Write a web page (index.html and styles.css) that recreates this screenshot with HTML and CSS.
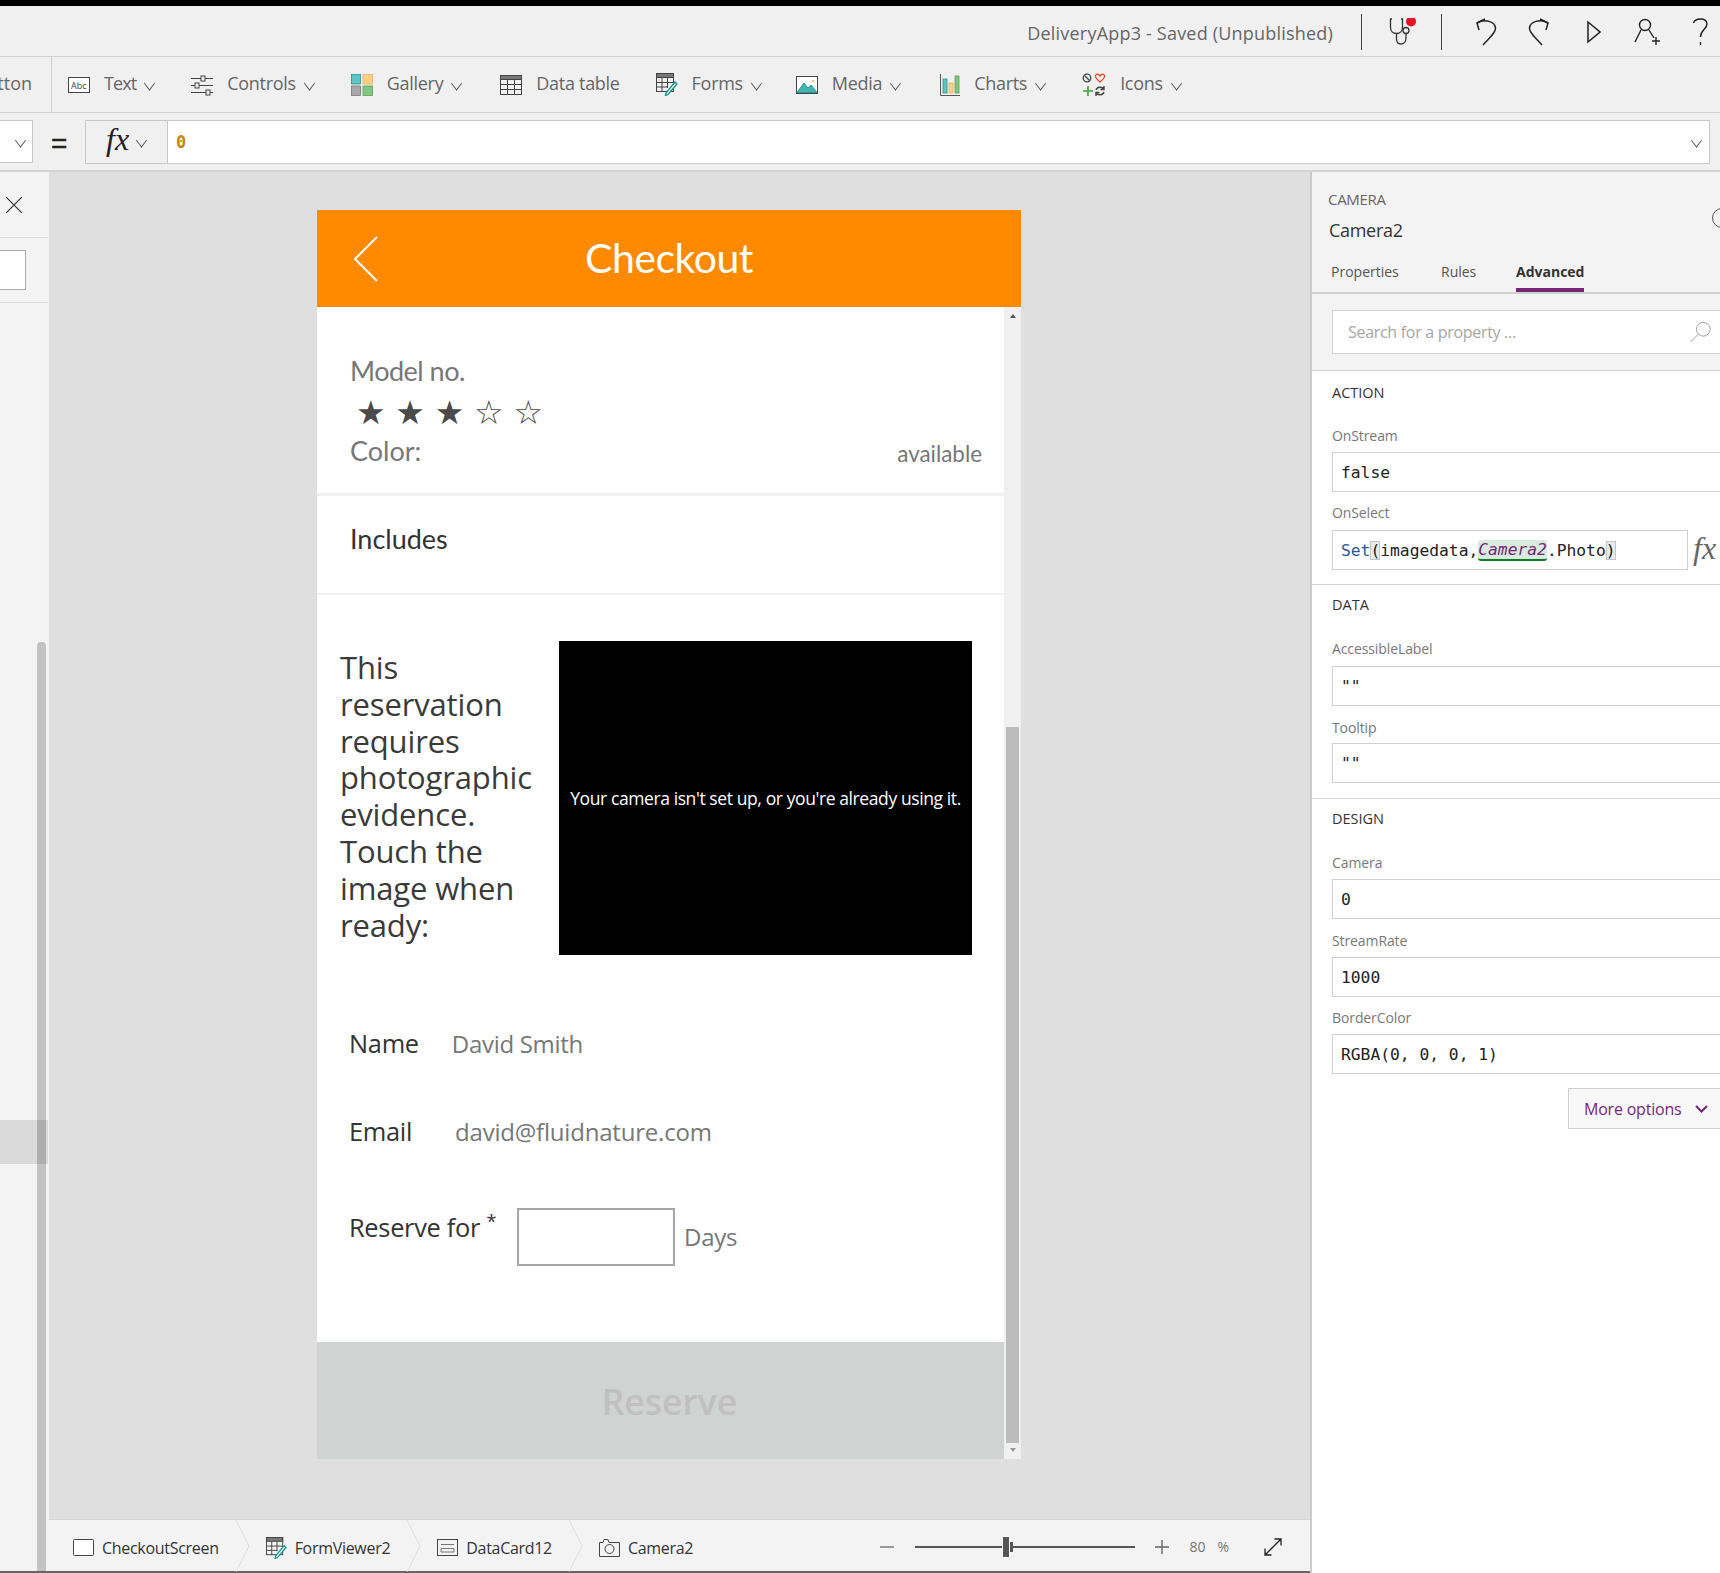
FILE: index.html
```html
<!DOCTYPE html>
<html>
	<head>
		<meta charset="UTF-8">
		<title>DeliveryApp3</title>
		<link rel="stylesheet" href="styles.css">
	</head>
	<body>
		<div class="app">
			<!-- title bar -->
			<div class="titlebar">
				<span class="app-name">DeliveryApp3 - Saved (Unpublished)</span>
				<span class="bar-sep sep-first"></span>
				<svg class="ic-check" width="28" height="28" viewBox="0 0 28 28" fill="none" stroke="#333" stroke-width="1.3">
					<path d="M3 1H1.5V9C1.5 13 4 15.5 7.5 15.5S13.5 13 13.5 9V1H12"/>
					<path d="M7.5 15.5V21C7.5 24.500 9.500 26 12 26S17 24 17 20V15.500"/>
					<circle cx="17" cy="12.500" r="3"/>
					<circle cx="22" cy="3.500" r="5" fill="#e81123" stroke="none"/>
				</svg>
				<span class="bar-sep sep-second"></span>
				<svg class="ic-undo" width="22" height="28" viewBox="0 0 22 28" fill="none" stroke="#222" stroke-width="1.5">
					<path d="M10 1L2 5L4 12"/>
					<path d="M8 27C14 20 21 15 20.500 10C20 4 10 0 2 5"/>
				</svg>
				<svg class="ic-redo" width="22" height="28" viewBox="0 0 22 28" fill="none" stroke="#222" stroke-width="1.5">
					<path d="M12 1L20 5L18 12"/>
					<path d="M14 27C8 20 1 15 1.500 10C2 4 12 0 20 5"/>
				</svg>
				<svg class="ic-play" width="14" height="24" viewBox="0 0 14 24" fill="none" stroke="#222" stroke-width="1.5">
					<path d="M1 2L13 12L1 22Z"/>
				</svg>
				<svg class="ic-user" width="27" height="28" viewBox="0 0 27 28" fill="none" stroke="#222" stroke-width="1.4">
					<circle cx="11" cy="7" r="5.500"/>
					<path d="M7 12L1 24M15 12L20 20"/>
					<path d="M22 19V27M18 23H26"/>
				</svg>
				<svg class="ic-help" width="17" height="30" viewBox="0 0 17 30" fill="none" stroke="#222" stroke-width="1.4">
					<path d="M1.500 6C3 1 14 0 15 6.500C15.500 12 8.500 12.500 8.500 20"/>
					<path d="M8.500 25V28"/>
				</svg>
			</div>

			<!-- insert toolbar -->
			<div class="toolbar">
				<div class="tool-cut"><span>tton</span></div>
				<div class="tool">
					<svg width="22" height="16" viewBox="0 0 22 16" fill="#fff" stroke="#444">
						<rect x="0.500" y="0.500" width="21" height="15"/>
						<text x="3" y="11.500" class="ic-abc">Abc</text>
					</svg>
					<span class="tool-label label-text">Text</span><i class="chev"></i>
				</div>
				<div class="tool">
					<svg width="22" height="22" viewBox="0 0 22 22" fill="none" stroke="#444">
						<path d="M0 4.500H22M0 11.500H22M0 18.500H22"/>
						<rect x="10" y="2" width="4" height="5" fill="#f0f0f0"/>
						<rect x="4" y="9" width="4" height="5" fill="#f0f0f0"/>
						<rect x="15" y="16" width="4" height="5" fill="#f0f0f0"/>
					</svg>
					<span class="tool-label">Controls</span><i class="chev"></i>
				</div>
				<div class="tool tool-gallery">
					<svg width="22" height="22" viewBox="0 0 22 22" stroke="#666" stroke-width="0.800">
						<rect x="0.500" y="0.500" width="9" height="9.500" fill="#5fc4c4" stroke="#2b8f8f"/>
						<rect x="12" y="0.500" width="9.500" height="9.500" fill="#fbcf86" stroke="#e8b060"/>
						<rect x="0.500" y="12" width="9" height="9.500" fill="#a8a8a8" stroke="#777"/>
						<rect x="12" y="12" width="9.500" height="9.500" fill="#86c486" stroke="#55a055"/>
					</svg>
					<span class="tool-label">Gallery</span><i class="chev"></i>
				</div>
				<div class="tool tool-table">
					<svg width="22" height="20" viewBox="0 0 22 20" fill="none" stroke="#444">
						<rect x="0.500" y="0.500" width="21" height="19"/>
						<rect x="0.500" y="0.500" width="21" height="4" fill="#777"/>
						<path d="M0 9.500H22M0 14.500H22M7.500 5V20M14.500 5V20"/>
					</svg>
					<span class="tool-label">Data table</span>
				</div>
				<div class="tool tool-forms">
					<svg width="22" height="23" viewBox="0 0 22 23" fill="none" stroke="#444">
						<rect x="0.500" y="0.500" width="17" height="18"/>
						<rect x="0.500" y="0.500" width="17" height="4" fill="#777"/>
						<path d="M0 9.500H17M0 14H12M6 5V19M11.500 5V15"/>
						<path d="M19 9L21 11L12 21.500L9.500 22.500L10 20Z" fill="#f0f0f0" stroke="#12928f" stroke-width="1.300"/>
					</svg>
					<span class="tool-label">Forms</span><i class="chev"></i>
				</div>
				<div class="tool tool-media">
					<svg width="22" height="18" viewBox="0 0 22 18" fill="#fff" stroke="#444">
						<rect x="0.500" y="0.500" width="21" height="17"/>
						<path d="M1 16.500L8 7L12 12L15 9L21 16.500Z" fill="#45b3b0" stroke="#2b9a98"/>
						<circle cx="17" cy="5" r="1" fill="#f5b24a" stroke="none"/>
					</svg>
					<span class="tool-label">Media</span><i class="chev"></i>
				</div>
				<div class="tool">
					<svg width="20" height="22" viewBox="0 0 20 22" fill="none">
						<path d="M0.500 0V21.500H20" stroke="#555"/>
						<rect x="3" y="5" width="4" height="14" fill="#5fc4c4" stroke="#2b8f8f" stroke-width="0.800"/>
						<rect x="9" y="9" width="4" height="10" fill="#fbcf86" stroke="#e8b060" stroke-width="0.800"/>
						<rect x="15" y="2" width="4" height="17" fill="#86c486" stroke="#55a055" stroke-width="0.800"/>
					</svg>
					<span class="tool-label">Charts</span><i class="chev"></i>
				</div>
				<div class="tool">
					<svg width="24" height="24" viewBox="0 0 24 24" fill="none">
						<circle cx="5" cy="5" r="3.800" stroke="#444" stroke-width="1.300"/>
						<path d="M2.500 2.500L7.500 7.500" stroke="#444" stroke-width="1.300"/>
						<path d="M18 9C15 6.500 13 4.500 13.500 2.500C14.500 0.500 17 1 18 3C19 1 21.500 0.500 22.500 2.500C23 4.500 21 6.500 18 9Z" stroke="#e8431f" stroke-width="1.300"/>
						<path d="M6 13V23M1 18H11" stroke="#3aa43a" stroke-width="1.600"/>
						<path d="M14 17C15 13.500 20 13.500 22 16M22 13V16.500H18.500M22 19C21 22.500 16 22.500 14 20M14 23V19.500H17.500" stroke="#444" stroke-width="1.400"/>
					</svg>
					<span class="tool-label">Icons</span><i class="chev"></i>
				</div>
			</div>

			<!-- formula bar -->
			<div class="formula-bar">
				<div class="prop-select"><i class="chev chev-dark"></i></div>
				<span class="equals">=</span>
				<div class="fx-btn"><span class="fx-text">fx</span><i class="chev chev-dark"></i></div>
				<div class="formula-input">
					<span class="formula-value">0</span>
					<i class="chev chev-dark"></i>
				</div>
			</div>

			<div class="workspace">
				<!-- tree view, cut off on the left -->
				<div class="tree">
					<div class="tree-close">
						<svg width="16" height="16" viewBox="0 0 16 16" stroke="#333" stroke-width="1.200"><path d="M0 0L16 16M16 0L0 16"/></svg>
					</div>
					<div class="tree-search"><div class="tree-input"></div></div>
					<div class="tree-selected"></div>
					<div class="tree-scroll"></div>
				</div>

				<div class="stage">
					<div class="canvas">
						<div class="phone">
							<div class="phone-head">
								<svg class="back" width="24" height="46" viewBox="0 0 24 46" fill="none" stroke="#fff" stroke-width="2"><path d="M23 1L1 23L23 45"/></svg>
								<span class="phone-title">Checkout</span>
							</div>
							<div class="phone-body">
								<div class="phone-main">
									<div class="block-model">
										<div class="model-name model-no">Model no.</div>
										<div class="stars">
											<span class="star">★</span><span class="star">★</span><span class="star">★</span><span class="star">☆</span><span class="star">☆</span>
										</div>
										<div class="color-row">
											<span class="model-name">Color:</span>
											<span class="avail">available</span>
										</div>
									</div>
									<div class="block-includes">Includes</div>
									<div class="block-photo">
										<div class="photo-text">This reservation requires photographic evidence. Touch the image when ready:</div>
										<div class="camera-box">Your camera isn't set up, or you're already using it.</div>
									</div>
									<div class="form-row name-row">
										<span class="form-label">Name</span>
										<span class="form-value name-value">David Smith</span>
									</div>
									<div class="form-row email-row">
										<span class="form-label">Email</span>
										<span class="form-value email-value">david@fluidnature.com</span>
									</div>
									<div class="form-row reserve-row">
										<span class="form-label reserve-label">Reserve for <sup class="req">*</sup></span>
										<div class="days-input"></div>
										<span class="form-value days">Days</span>
									</div>
									<div class="reserve-btn">Reserve</div>
								</div>
								<div class="phone-scroll">
									<span class="arrow-up"></span>
									<div class="phone-thumb"></div>
									<span class="arrow-down"></span>
								</div>
							</div>
						</div>
					</div>

					<!-- breadcrumb and zoom -->
					<div class="statusbar">
						<div class="crumb crumb-first">
							<svg width="21" height="17" viewBox="0 0 21 17" fill="#fff" stroke="#444"><rect x="0.500" y="0.500" width="20" height="16" rx="1"/></svg>
							<span>CheckoutScreen</span>
						</div>
						<svg class="crumb-sep" width="14" height="52" viewBox="0 0 14 52" fill="none" stroke="#ddd"><path d="M0 0L13 26L0 52"/></svg>
						<div class="crumb">
							<svg width="21" height="22" viewBox="0 0 22 23" fill="none" stroke="#444">
								<rect x="0.500" y="0.500" width="17" height="18"/>
								<rect x="0.500" y="0.500" width="17" height="4" fill="#777"/>
								<path d="M0 9.500H17M0 14H12M6 5V19M11.500 5V15"/>
								<path d="M19 9L21 11L12 21.500L9.500 22.500L10 20Z" fill="#f3f3f3" stroke="#12928f" stroke-width="1.300"/>
							</svg>
							<span>FormViewer2</span>
						</div>
						<svg class="crumb-sep" width="14" height="52" viewBox="0 0 14 52" fill="none" stroke="#ddd"><path d="M0 0L13 26L0 52"/></svg>
						<div class="crumb">
							<svg width="21" height="17" viewBox="0 0 21 17" fill="none" stroke="#444">
								<rect x="0.500" y="0.500" width="20" height="16"/>
								<path d="M4 5.500H17M4 9.500H17V13H4Z" stroke="#777"/>
							</svg>
							<span>DataCard12</span>
						</div>
						<svg class="crumb-sep" width="14" height="52" viewBox="0 0 14 52" fill="none" stroke="#ddd"><path d="M0 0L13 26L0 52"/></svg>
						<div class="crumb">
							<svg width="21" height="18" viewBox="0 0 21 18" fill="none" stroke="#444">
								<path d="M0.500 3.500H4L5 0.500H9L10 3.500H20.500V17.500H0.500Z"/>
								<circle cx="10.500" cy="10" r="4.500"/>
							</svg>
							<span>Camera2</span>
						</div>
						<div class="zoom-tools">
							<span class="zoom-minus"></span>
							<div class="slider">
								<span class="slider-left"></span>
								<span class="slider-thumb"></span>
								<span class="slider-tick"></span>
								<span class="slider-right"></span>
							</div>
							<svg class="zoom-plus" width="14" height="14" viewBox="0 0 14 14" stroke="#666" stroke-width="1.400"><path d="M7 0V14M0 7H14"/></svg>
							<span class="zoom-num">80</span>
							<span class="zoom-pct">%</span>
							<svg class="zoom-fit" width="18" height="18" viewBox="0 0 18 18" fill="none" stroke="#222" stroke-width="1.300">
								<path d="M1 17L17 1M10.500 1H17V7.500M1 10.500V17H7.500"/>
							</svg>
						</div>
					</div>
				</div>

				<!-- properties pane -->
				<div class="pane">
					<div class="pane-head">
						<div class="pane-type">CAMERA</div>
						<div class="pane-name">Camera2</div>
						<span class="pane-info"></span>
						<div class="tabs">
							<span class="tab tab-props">Properties</span>
							<span class="tab tab-rules">Rules</span>
							<span class="tab tab-active">Advanced</span>
						</div>
						<div class="search">
							<span>Search for a property ...</span>
							<svg width="22" height="22" viewBox="0 0 24 24" fill="none" stroke="#999"><circle cx="14.500" cy="9" r="7.500"/><path d="M9 14.500L0.500 23"/></svg>
						</div>
					</div>
					<div class="section section-action">
						<div class="section-title">ACTION</div>
						<div class="field-label">OnStream</div>
						<div class="field-input">false</div>
						<div class="field-label label-select">OnSelect</div>
						<div class="select-row">
							<div class="field-input field-short">
								<span class="code-fn">Set</span><span class="code-paren">(</span>imagedata,<span class="code-ref">Camera2</span>.Phot<span class="code-last">o</span><span class="code-paren">)</span>
							</div>
							<span class="fx-side">fx</span>
						</div>
					</div>
					<div class="section section-data">
						<div class="section-title">DATA</div>
						<div class="field-label">AccessibleLabel</div>
						<div class="field-input field-accessible">""</div>
						<div class="field-label">Tooltip</div>
						<div class="field-input field-tooltip">""</div>
					</div>
					<div class="section section-last">
						<div class="section-title">DESIGN</div>
						<div class="field-label">Camera</div>
						<div class="field-input">0</div>
						<div class="field-label">StreamRate</div>
						<div class="field-input">1000</div>
						<div class="field-label label-border">BorderColor</div>
						<div class="field-input">RGBA(0, 0, 0, 1)</div>
						<div class="more-btn">
							<span>More options</span>
							<svg width="13" height="8" viewBox="0 0 13 8" fill="none" stroke="#742774" stroke-width="2"><path d="M1 1L6.500 6.500L12 1"/></svg>
						</div>
					</div>
				</div>
			</div>
		</div>
	</body>
</html>
```

FILE: styles.css
```css
*{
	box-sizing: border-box;
}
html,body{
	margin: 0;
	padding: 0;
	height: 100%;
	overflow: hidden;
}
body{
	font-family: "Open Sans", sans-serif;
	color: #333;
	background-color: #f0f0f0;
}
svg{
	display: block;
	flex: none;
}
i{
	font-style: normal;
}
.app{
	display: flex;
	flex-direction: column;
	width: 1720px;
	height: 1573px;
	border-top: 6px solid #000;
	overflow: hidden;
}

/* title bar */
.titlebar{
	display: flex;
	align-items: center;
	justify-content: flex-end;
	height: 51px;
	padding: 1px 11px 0 0;
	border-bottom: 1px solid #d0d0d0;
	flex: none;
}
.app-name{
	font-size: 18px;
	letter-spacing: .2px;
	color: #666;
	margin: 2px 28px 0 0;
}
.bar-sep{
	width: 1px;
	height: 36px;
	background-color: #444;
}
.ic-check{
	margin-left: 27px;
}
.sep-second{
	margin-left: 24px;
}
.ic-undo{
	margin-left: 33px;
}
.ic-redo{
	margin-left: 31px;
}
.ic-play{
	margin-left: 37px;
}
.ic-user{
	margin-left: 33px;
}
.ic-help{
	margin-left: 31px;
}

/* toolbar */
.toolbar{
	display: flex;
	align-items: center;
	height: 56px;
	flex: none;
	border-bottom: 1px solid #d0d0d0;
}
.tool-cut{
	width: 52px;
	height: 100%;
	border-right: 1px solid #d0d0d0;
	display: flex;
	align-items: center;
	justify-content: flex-end;
	padding: 0 19px 4px 0;
	font-size: 18px;
	color: #666;
	overflow: hidden;
	margin-right: 16px;
}
.tool{
	display: flex;
	align-items: center;
	margin-right: 35px;
}
.tool-gallery{
	margin-right: 37px;
}
.tool-table{
	margin-right: 36px;
}
.tool-forms{
	margin-right: 33px;
}
.tool-media{
	margin-right: 38px;
}
.tool svg{
	margin-right: 14px;
}
.tool-label{
	font-size: 18px;
	letter-spacing: -.3px;
	color: #666;
	margin-top: -4px;
}
.label-text{
	letter-spacing: -.9px;
}
.ic-abc{
	font-family: "Open Sans", sans-serif;
	font-size: 9px;
	fill: #444;
	stroke: none;
}
.chev{
	display: block;
	width: 9px;
	height: 9px;
	border-right: 1px solid #555;
	border-bottom: 1px solid #555;
	transform: rotate(45deg) skew(8deg,8deg);
	margin: -2px 2px 0 9px;
	flex: none;
}

/* formula bar */
.formula-bar{
	display: flex;
	align-items: center;
	height: 59px;
	flex: none;
	border-bottom: 2px solid #d4d4d4;
}
.prop-select{
	width: 33px;
	height: 43px;
	background-color: #fff;
	border: 1px solid #c8c8c8;
	border-left: 0;
	display: flex;
	align-items: center;
	justify-content: flex-end;
	padding-right: 5px;
}
.chev-dark{
	margin: -3px 2px 0 0;
}
.equals{
	width: 52px;
	padding: 4px 0 0 18px;
	font-size: 28px;
	color: #222;
	-webkit-text-stroke: .4px #222;
	font-family: "Liberation Sans", sans-serif;
}
.fx-btn{
	width: 82px;
	height: 44px;
	border: 1px solid #c8c8c8;
	border-right: 0;
	display: flex;
	align-items: center;
	padding-left: 20px;
}
.fx-text{
	font-family: "Liberation Serif", serif;
	font-style: italic;
	font-size: 32px;
	color: #222;
	margin-right: 8px;
	margin-top: -4px;
}
.formula-input{
	width: 1543px;
	height: 44px;
	background-color: #fff;
	border: 1px solid #c8c8c8;
	display: flex;
	align-items: center;
	justify-content: space-between;
	padding: 0 6px 0 8px;
}
.formula-value{
	font-family: "DejaVu Sans Mono", monospace;
	font-size: 17px;
	color: #c8860a;
	font-weight: bold;
}

.workspace{
	display: flex;
	flex: 1;
	min-height: 0;
}

/* tree */
.tree{
	position: relative;
	width: 49px;
	flex: none;
	background-color: #f3f3f3;
	border-bottom: 2px solid #666;
}
.tree-close{
	height: 66px;
	border-bottom: 1px solid #dcdcdc;
	margin-right: 1px;
	padding: 25px 0 0 6px;
}
.tree-search{
	height: 65px;
	padding-top: 12px;
	border-bottom: 1px solid #dcdcdc;
	margin-right: 1px;
}
.tree-input{
	width: 26px;
	height: 40px;
	background-color: #fff;
	border: 1px solid #aaa;
	border-left: 0;
}
.tree-selected{
	height: 44px;
	margin-top: 817px;
	margin-right: 1px;
	background-color: #dadada;
}
.tree-scroll{
	position: absolute;
	left: 37px;
	top: 470px;
	bottom: 0;
	width: 9px;
	border-radius: 4px 4px 0 0;
	background-color: rgba(0,0,0,.2);
}

/* stage */
.stage{
	display: flex;
	flex-direction: column;
	flex: 1;
	min-width: 0;
	background-color: #dfdfdf;
}
.canvas{
	flex: 1;
	padding: 38px 0 0 268px;
	min-height: 0;
}
.phone{
	display: flex;
	flex-direction: column;
	width: 704px;
	height: 1249px;
	background-color: #fff;
}
.phone-head{
	position: relative;
	display: flex;
	align-items: center;
	justify-content: center;
	height: 97px;
	flex: none;
	background-color: #ff8a00;
}
.back{
	position: absolute;
	left: 37px;
	top: 26px;
}
.phone-title{
	font-family: Lato, sans-serif;
	font-size: 41px;
	color: #fff;
	letter-spacing: -.5px;
	margin-top: -2px;
}
.phone-body{
	display: flex;
	flex: 1;
	min-height: 0;
}
.phone-main{
	display: flex;
	flex-direction: column;
	width: 687px;
	flex: none;
}
.block-model{
	height: 189px;
	flex: none;
	padding: 51px 22px 0 33px;
	border-bottom: 3px solid #f0f0f0;
}
.model-name{
	font-family: Lato, sans-serif;
	font-size: 27px;
	line-height: 26px;
	color: #777;
}
.model-no{
	letter-spacing: -.5px;
}
.stars{
	display: flex;
	height: 24px;
	margin: 16px 0 14px 0;
	padding-left: 1px;
}
.star{
	display: flex;
	align-items: center;
	justify-content: center;
	width: 39.4px;
	font-family: "DejaVu Sans", sans-serif;
	font-size: 33px;
	color: #4a4a4a;
}
.color-row{
	display: flex;
	justify-content: space-between;
	align-items: flex-end;
}
.avail{
	font-family: Lato, sans-serif;
	font-size: 22.4px;
	line-height: 26px;
	color: #777;
	margin-bottom: -3px;
}
.block-includes{
	height: 99px;
	flex: none;
	padding: 0 0 12px 33px;
	display: flex;
	align-items: center;
	font-family: Lato, sans-serif;
	font-size: 27px;
	color: #333;
	border-bottom: 2px solid #f0f0f0;
}
.block-photo{
	display: flex;
	padding: 46px 0 0 23px;
	flex: none;
}
.photo-text{
	width: 219px;
	padding-right: 18px;
	margin-top: 8px;
	font-size: 31px;
	line-height: 36.8px;
	letter-spacing: -.15px;
	color: #3a3a3a;
	flex: none;
}
.camera-box{
	display: flex;
	align-items: center;
	justify-content: center;
	width: 413px;
	height: 314px;
	flex: none;
	background-color: #000;
	color: #fff;
	font-size: 17.5px;
	letter-spacing: -.4px;
}
.form-row{
	display: flex;
	align-items: flex-start;
	padding-left: 32px;
	flex: none;
}
.form-label{
	font-size: 25.4px;
	line-height: 30px;
	letter-spacing: -.3px;
	color: #333;
}
.form-value{
	font-size: 24px;
	line-height: 30px;
	letter-spacing: -.3px;
	color: #777;
}
.name-row{
	margin-top: 73px;
}
.name-value{
	margin: 1px 0 0 33px;
}
.email-row{
	margin-top: 57px;
}
.email-value{
	margin: 1px 0 0 43px;
	letter-spacing: -.2px;
}
.reserve-row{
	margin-top: 61px;
}
.reserve-label{
	margin-top: 4px;
	white-space: nowrap;
}
.req{
	font-size: 18px;
	line-height: 0;
}
.days-input{
	width: 158px;
	height: 58px;
	margin-left: 21px;
	border: 2px solid #a6a6a6;
	flex: none;
}
.days{
	margin: 14px 0 0 9px;
}
.reserve-btn{
	display: flex;
	align-items: center;
	justify-content: center;
	height: 117px;
	margin-top: auto;
	padding-left: 18px;
	background-color: #cfd3d2;
	color: #c1bfc0;
	font-size: 35.5px;
	font-weight: 600;
	flex: none;
}
.phone-scroll{
	display: flex;
	flex-direction: column;
	align-items: center;
	width: 17px;
	background-color: #f0f0f0;
}
.arrow-up{
	width: 0;
	height: 0;
	margin-top: 7px;
	border-left: 3px solid transparent;
	border-right: 3px solid transparent;
	border-bottom: 4px solid #555;
}
.phone-thumb{
	width: 13px;
	height: 716px;
	margin-top: 409px;
	background-color: #bcbcbc;
}
.arrow-down{
	width: 0;
	height: 0;
	margin-top: 5px;
	border-left: 3px solid transparent;
	border-right: 3px solid transparent;
	border-top: 4px solid #999;
}

/* status bar */
.statusbar{
	display: flex;
	align-items: center;
	height: 54px;
	flex: none;
	padding-left: 24px;
	background-color: #f3f3f3;
	border-top: 1px solid #d6d6d6;
	border-bottom: 2px solid #666;
}
.crumb{
	display: flex;
	align-items: center;
	font-size: 16px;
	letter-spacing: -.3px;
	color: #333;
	margin: 4px 0 0 16px;
}
.crumb-first{
	margin-left: 0;
}
.crumb svg{
	margin-right: 8px;
}
.crumb-sep{
	margin-left: 17px;
}
.zoom-tools{
	display: flex;
	align-items: center;
	margin: 2px 0 0 auto;
	padding-right: 28px;
}
.zoom-minus{
	width: 14px;
	height: 2px;
	background-color: #999;
}
.slider{
	display: flex;
	align-items: center;
	margin-left: 21px;
}
.slider-left{
	width: 88px;
	height: 2px;
	background-color: #555;
}
.slider-thumb{
	width: 6px;
	height: 20px;
	background-color: #555;
	box-shadow: 0 0 0 1px #fff;
}
.slider-tick{
	width: 3px;
	height: 10px;
	margin-left: 1px;
	background-color: #555;
}
.slider-right{
	width: 122px;
	height: 2px;
	background-color: #555;
}
.zoom-plus{
	margin-left: 20px;
}
.zoom-num{
	margin-left: 20px;
	font-size: 14px;
	color: #777;
}
.zoom-pct{
	margin-left: 12px;
	font-size: 14px;
	color: #777;
}
.zoom-fit{
	margin-left: 35px;
}

/* properties pane */
.pane{
	display: flex;
	flex-direction: column;
	width: 410px;
	flex: none;
	background-color: #fff;
	border-left: 2px solid #ccc;
	overflow: hidden;
}
.pane-head{
	position: relative;
	height: 199px;
	flex: none;
	padding-top: 18px;
	background-color: #f3f3f3;
	border-bottom: 1px solid #d0d0d0;
}
.pane-type{
	height: 18px;
	padding-left: 16px;
	font-size: 15px;
	line-height: 18px;
	letter-spacing: -.3px;
	color: #666;
}
.pane-name{
	height: 22px;
	margin-top: 11px;
	padding-left: 17px;
	font-size: 18px;
	line-height: 22px;
	letter-spacing: -.3px;
	color: #333;
}
.pane-info{
	position: absolute;
	left: 400px;
	top: 36px;
	width: 20px;
	height: 20px;
	border: 1px solid #555;
	border-radius: 50%;
}
.tabs{
	display: flex;
	height: 42px;
	margin-top: 11px;
	padding-left: 19px;
	border-bottom: 2px solid #d0d0d0;
}
.tab{
	height: 40px;
	padding-top: 10px;
	font-size: 14px;
	line-height: 19px;
	color: #555;
}
.tab-props{
	width: 110px;
}
.tab-rules{
	width: 75px;
}
.tab-active{
	font-weight: 700;
	color: #333;
	border-bottom: 4px solid #742774;
}
.search{
	display: flex;
	align-items: center;
	justify-content: space-between;
	width: 398px;
	height: 44px;
	margin: 16px 0 0 20px;
	padding: 0 17px 0 15px;
	background-color: #fff;
	border: 1px solid #d0d0d0;
	font-size: 16px;
	letter-spacing: -.3px;
	color: #a6a6a6;
}
.section{
	padding: 10px 0 15px 20px;
	border-bottom: 1px solid #d4d4d4;
	flex: none;
}
.section-action{
	padding: 12px 0 14px 20px;
}
.section-last{
	border-bottom: 0;
}
.section-title{
	height: 20px;
	margin-bottom: 24px;
	font-size: 14.5px;
	line-height: 20px;
	font-weight: 500;
	color: #333;
}
.section-action .section-title{
	margin-bottom: 23px;
}
.field-label{
	height: 20px;
	margin-top: 12px;
	font-size: 14px;
	line-height: 20px;
	letter-spacing: -.1px;
	color: #777;
}
.section-title + .field-label{
	margin-top: 0;
}
.label-select,
.label-border{
	margin-top: 11px;
}
.field-input{
	display: flex;
	align-items: center;
	width: 400px;
	height: 40px;
	margin-top: 6px;
	padding-left: 8px;
	background-color: #fff;
	border: 1px solid #d0d0d0;
	font-family: "DejaVu Sans Mono", monospace;
	font-size: 16.3px;
	white-space: pre;
	color: #222;
}
.section-data .field-accessible{
	margin-top: 7px;
}
.section-data .field-tooltip{
	margin-top: 5px;
}
.field-short{
	width: 356px;
}
.select-row{
	display: flex;
	align-items: center;
	margin-top: 7px;
}
.select-row .field-input{
	margin-top: 0;
}
.fx-side{
	margin: -3px 0 0 5px;
	font-family: "Liberation Serif", serif;
	font-style: italic;
	font-size: 32px;
	color: #666;
}
.code-fn{
	color: #2b579a;
}
.code-paren{
	background-color: #e8ece8;
	box-shadow: inset 0 0 0 1px #c0c8c0;
}
.code-ref{
	font-style: italic;
	color: #742774;
	background-color: #d9eadf;
	border-radius: 3px;
	border-bottom: 2px solid #107c26;
}
.more-btn{
	display: flex;
	align-items: center;
	width: 200px;
	height: 41px;
	margin: 14px 0 0 236px;
	padding-left: 15px;
	background-color: #f8f8f8;
	border: 1px solid #d0d0d0;
	font-size: 16px;
	letter-spacing: -.2px;
	color: #742774;
}
.more-btn svg{
	margin-left: 13px;
}
```
